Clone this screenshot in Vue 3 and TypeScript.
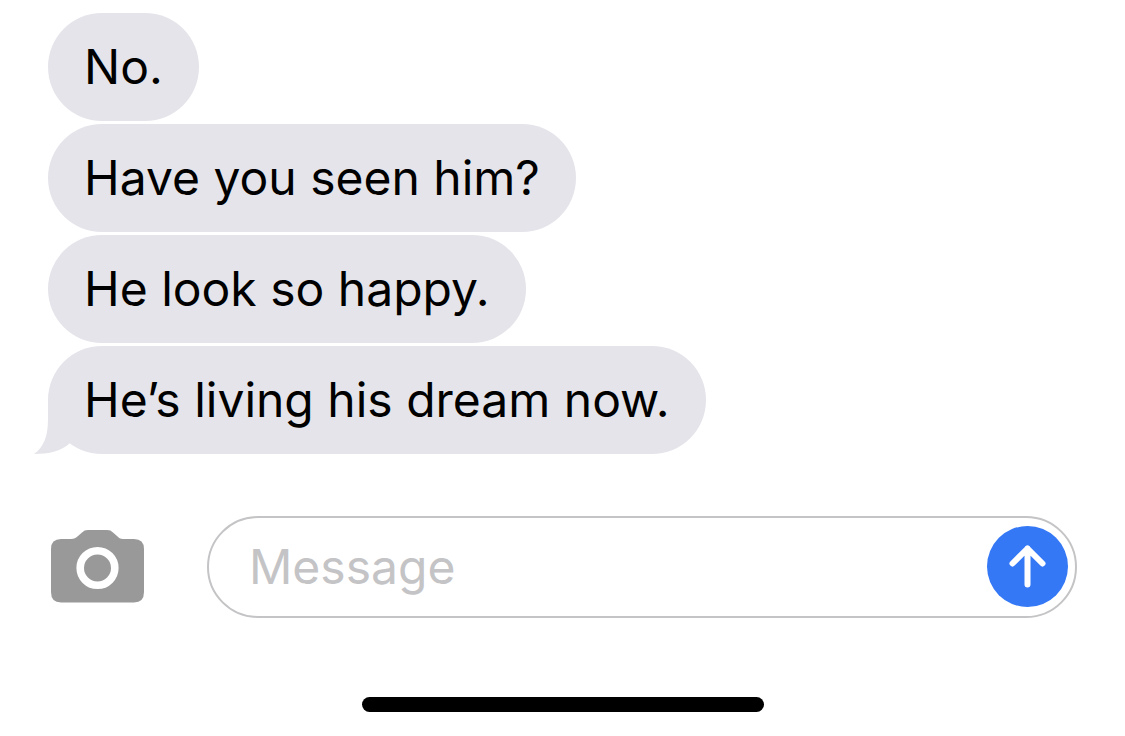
<script setup lang="ts">
import { ref } from 'vue'

interface Message {
  id: number
  text: string
}

const messages = ref<Message[]>([
  { id: 1, text: 'No.' },
  { id: 2, text: 'Have you seen him?' },
  { id: 3, text: 'He look so happy.' },
  { id: 4, text: 'He’s living his dream now.' },
])

const draft = ref('')
</script>

<template>
  <main class="chat">
    <ul class="thread">
      <li v-for="(message, index) in messages" :key="message.id" class="bubble">
        {{ message.text }}
        <svg
          v-if="index === messages.length - 1"
          class="tail"
          viewBox="0 0 38 54"
          aria-hidden="true"
        >
          <path d="M14 0V19C14 36 10 47 0 54C15 54 28 51 36 43L38 0Z" />
        </svg>
      </li>
    </ul>

    <form class="composer" @submit.prevent>
      <button type="button" class="camera" aria-label="Camera">
        <svg viewBox="0 0 93 74" aria-hidden="true">
          <path
            d="M10 9H20C23 9 25 8 27 6L31 2.500C33 .8 34 0 37 0H56C59 0 60 .8 62 2.500L66 6C68 8 69 9 72 9H83Q93 9 93 19V62Q93 72.500 83 72.500H10Q0 72.500 0 62V19Q0 9 10 9Z"
            fill="#999"
          />
          <circle cx="46.500" cy="38" r="17.300" fill="none" stroke="#fff" stroke-width="7.600" />
        </svg>
      </button>
      <div class="field">
        <input v-model="draft" type="text" placeholder="Message" aria-label="Message" />
        <button type="submit" class="send" aria-label="Send">
          <svg viewBox="0 0 81 81" aria-hidden="true">
            <path d="M40.500 58.500V22.500M25.500 37.500L40.500 22.500L55.500 37.500" />
          </svg>
        </button>
      </div>
    </form>

    <div class="home-indicator"></div>
  </main>
</template>

<style>
body {
  background: #fff;
}
</style>

<style scoped>
.chat {
  display: flex;
  flex-direction: column;
  padding: 13px 48px 24px;
  font-family: Inter, "Liberation Sans", sans-serif;
  font-size: 48px;
  color: #000;
}

.thread {
  display: flex;
  flex-direction: column;
  align-items: flex-start;
  gap: 3px;
  margin: 0;
  padding: 0;
  list-style: none;
}

.bubble {
  position: relative;
  padding: 24px 36px;
  border-radius: 54px;
  background: #e5e4ea;
  line-height: 60px;
}

.tail {
  position: absolute;
  left: -14px;
  bottom: 0;
  width: 38px;
  height: 54px;
  fill: #e5e4ea;
}

.composer {
  display: flex;
  align-items: center;
  gap: 63px;
  margin-top: 62px;
  padding-left: 3px;
}

button {
  flex: none;
  margin: 0;
  padding: 0;
  border: 0;
  background: none;
  cursor: pointer;
}

button svg {
  display: block;
  width: 100%;
}

.camera {
  width: 93px;
}

.field {
  display: flex;
  flex: 1;
  align-items: center;
  min-width: 0;
  box-sizing: border-box;
  height: 102px;
  padding: 0 7px 1px 40px;
  border: 2px solid #c4c4c6;
  border-radius: 51px;
}

input {
  flex: 1;
  min-width: 0;
  padding: 0;
  border: 0;
  outline: 0;
  background: transparent;
  font: inherit;
  line-height: 60px;
  color: #000;
}

input::placeholder {
  color: #c4c4c6;
  opacity: 1;
}

.send {
  width: 81px;
  border-radius: 50%;
  background: #3478f6;
}

.send path {
  fill: none;
  stroke: #fff;
  stroke-width: 6;
  stroke-linecap: round;
  stroke-linejoin: round;
}

.home-indicator {
  align-self: center;
  width: 402px;
  height: 15px;
  margin-top: 79px;
  border-radius: 8px;
  background: #000;
}
</style>
